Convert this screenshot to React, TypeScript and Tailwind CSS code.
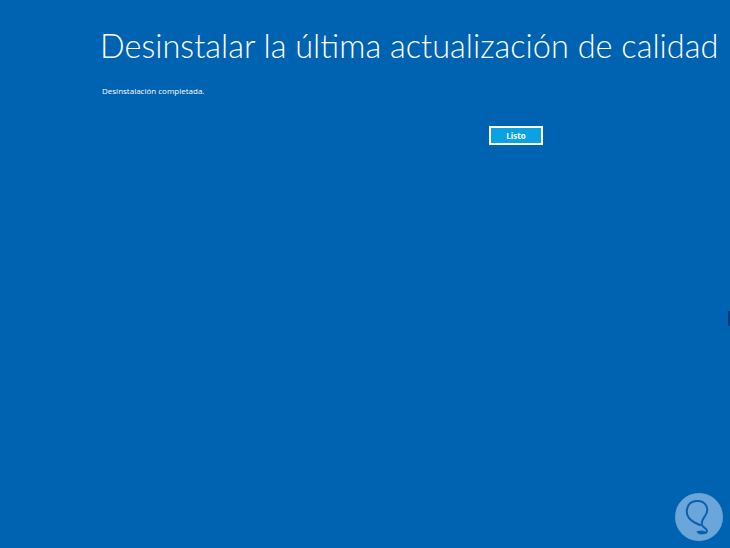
import React from "react";

export default function App() {
  return (
    <div className="relative w-[730px] h-[548px] bg-[#0063b1] overflow-hidden" style={{ fontFamily: 'Lato, sans-serif' }}>
      <div className="pl-[100px] pt-[26px] flex flex-col">
        <h1 className="text-white text-[32.5px] leading-[40px] font-light whitespace-nowrap">Desinstalar la última actualización de calidad</h1>
        <p className="text-white text-[8px] mt-[20px] leading-[10px] pl-[2px]" style={{ fontFamily: '"Open Sans", sans-serif' }}>Desinstalación completada.</p>
        <div className="flex mt-[30px] pl-[389px]">
          <button className="w-[54px] h-[19px] bg-[#0aa2e2] border-2 border-white text-white text-[8px] font-bold flex items-center justify-center" style={{ fontFamily: '"Open Sans", sans-serif' }}>Listo</button>
        </div>
      </div>
      <div className="absolute right-0 top-[311px] w-[2px] h-[15px] bg-[#003a78]" />
      <svg className="absolute left-[674px] top-[492px]" width="50" height="50" viewBox="0 0 50 50">
        <circle cx="25" cy="25" r="24" fill="#6aa6da" />
        <path d="M17 28 C10 22 12 10 22 9 C32 8 36 17 31 24 C29 27 27 29 28 33 C29 36 33 36 33 39 C33 42 25 42 24 40 C28 39 30 40 30 40 M17 28 C20 31 24 32 26 33" fill="none" stroke="#0a5fae" strokeWidth="2" strokeLinecap="round" />
      </svg>
    </div>
  );
}
